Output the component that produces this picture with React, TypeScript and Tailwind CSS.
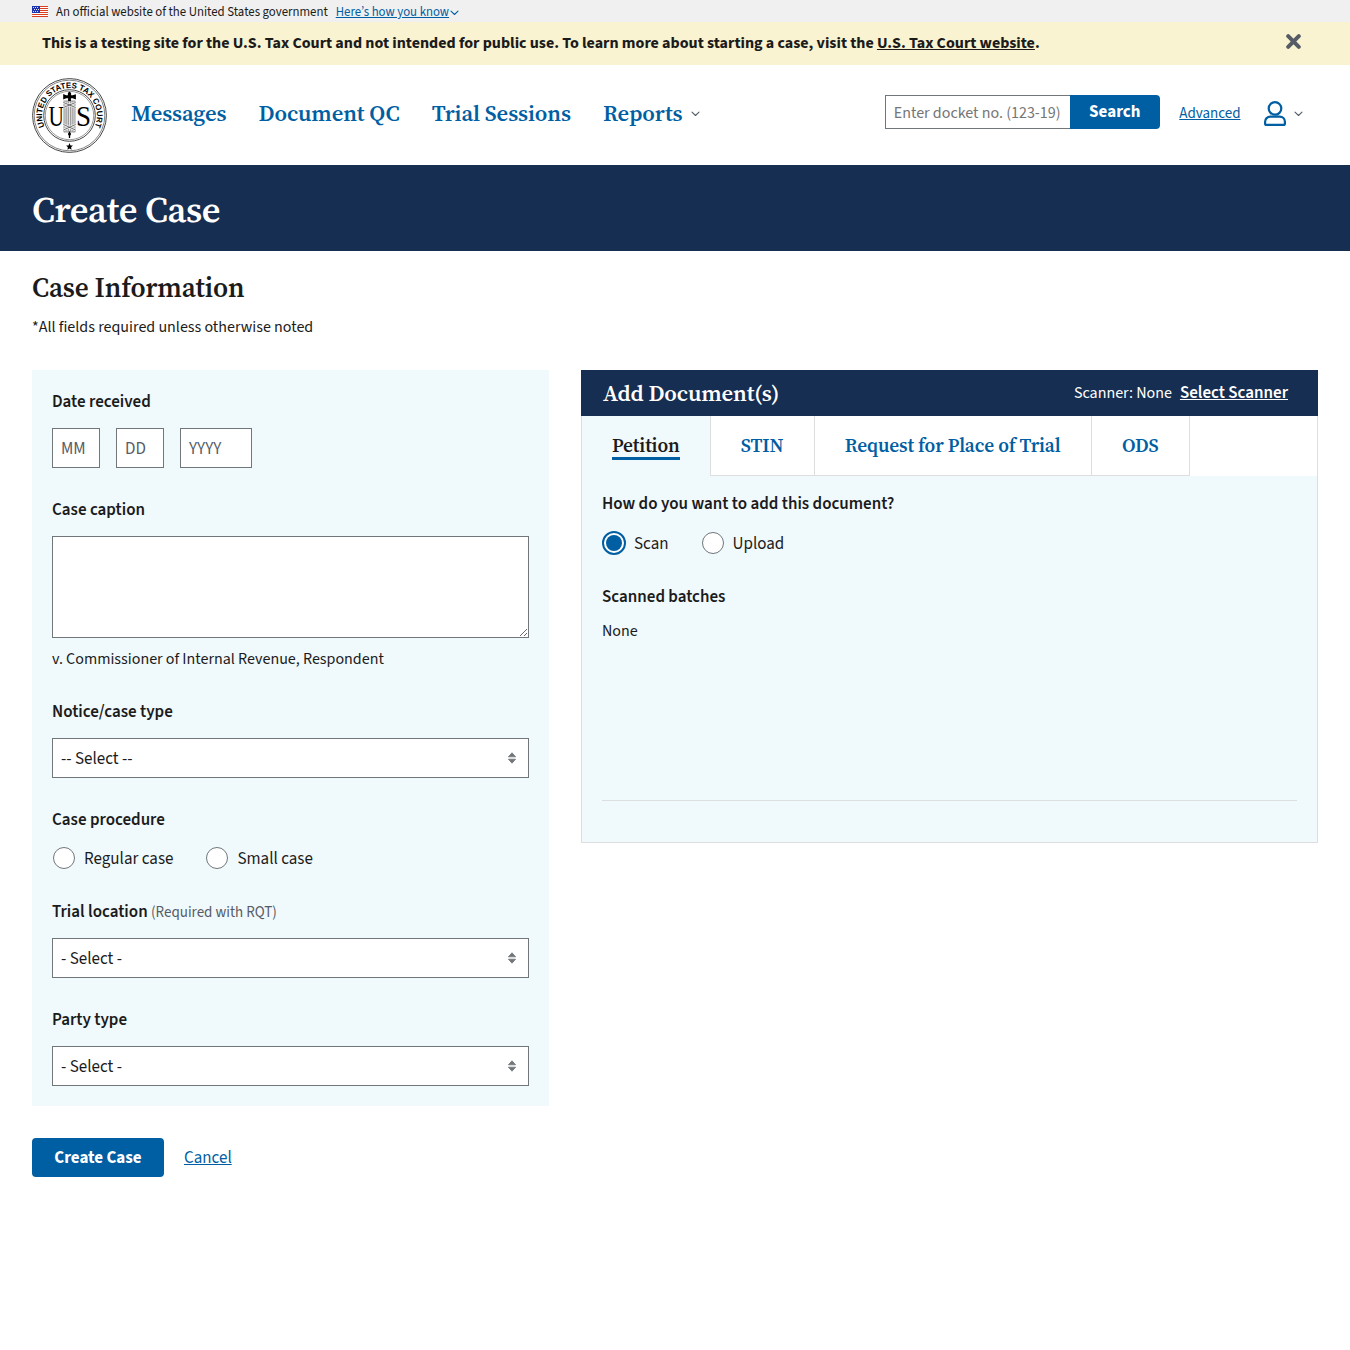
import type { ReactNode } from 'react';

const serif = "font-['Source_Serif_4','Noto_Serif_CJK_SC',serif] font-semibold";

function Flag() {
  return (
    <svg width="16" height="11" viewBox="0 0 16 11" className="block">
      <rect width="16" height="11" fill="#fff" />
      {[0, 2, 4, 6, 8, 10].map((y) => (
        <rect key={y} y={y} width="16" height="1" fill="#db3e1f" />
      ))}
      <rect width="8" height="7" fill="#1e33b1" />
      {[1, 3, 5].map((y) =>
        [1, 3, 5].map((x) => (
          <rect key={x + '-' + y} x={x + (y === 3 ? 1 : 0)} y={y} width="1" height="1" fill="#fff" opacity="0.85" />
        )),
      )}
    </svg>
  );
}

function Seal() {
  return (
    <svg width="75" height="75" viewBox="-37.5 -37.5 75 75" className="block">
      <defs>
        <path id="seal-arc" d="M -25 11.2 A 27.4 27.4 0 1 1 25 11.2" />
      </defs>
      <g fill="none" stroke="#333">
        <circle r="36.9" strokeWidth="0.9" />
        <circle r="35.3" strokeWidth="0.6" />
        <circle r="25.8" strokeWidth="0.9" />
        <circle r="24.2" strokeWidth="0.5" />
      </g>
      <text className="font-['Liberation_Sans',sans-serif] text-[8.2px] font-bold" fill="#000">
        <textPath href="#seal-arc" textLength="109" lengthAdjust="spacingAndGlyphs">UNITED STATES TAX COURT</textPath>
      </text>
      <g className="font-['Liberation_Serif',serif] text-[30px]" fill="#000">
        <text x="-21" y="10.8" textLength="15.4" lengthAdjust="spacingAndGlyphs">U</text>
        <text x="6.4" y="10.8" textLength="15" lengthAdjust="spacingAndGlyphs">S</text>
      </g>
      <rect x="-5.5" y="-14.5" width="11" height="31" fill="#e4e4e4" stroke="#555" strokeWidth="0.6" />
      <path d="M-3.4-14v30M-1.2-14v30M1.2-14v30M3.4-14v30" stroke="#666" strokeWidth="0.7" />
      <path d="M-6-13 6-8M6-13-6-8M-6 9 6 14.5M6 9-6 14.5" stroke="#fff" strokeWidth="2" />
      <path d="M-6-13 6-8M6-13-6-8M-6 9 6 14.5M6 9-6 14.5" stroke="#444" strokeWidth="0.8" />
      <path d="M-6.3-21.5l3 1.3h1.7v-2.3l1.6-1.4 1.6 1.4v2.3h1.6l3.2-1v5.2l-3.2-1.2H1.4v2.8h-2.8v-2.8h-1.9l-3 1.3z" fill="#000" />
      <path d="M0 16v6.5" stroke="#000" strokeWidth="1.3" />
      <circle cy="18.4" r="1.5" fill="#000" />
      <path d="M0 27.5l1 2.4 2.4.2-1.8 1.7.5 2.4L0 33l-2.1 1.2.5-2.4-1.8-1.7 2.4-.2z" fill="#000" />
    </svg>
  );
}

function Chevron({ className }: { className: string }) {
  return (
    <svg width="9" height="6" viewBox="0 0 9 6" className={className} fill="none" stroke="currentColor" strokeWidth="1.1" strokeLinecap="round" strokeLinejoin="round">
      <path d="M1 1.2 4.5 4.5 8 1.2" />
    </svg>
  );
}

function UserIcon() {
  return (
    <svg width="22" height="25" viewBox="0 0 22 25" className="block" fill="none" stroke="#005ea2" strokeWidth="2.2">
      <circle cx="11" cy="7.4" r="6.3" />
      <path d="M6.3 15.6h9.4a5.2 5.2 0 0 1 5.2 5.2v1.6a1.5 1.5 0 0 1-1.5 1.5H2.6a1.5 1.5 0 0 1-1.5-1.5v-1.6a5.2 5.2 0 0 1 5.2-5.2z" />
    </svg>
  );
}

function CloseIcon() {
  return (
    <svg width="15" height="15" viewBox="0 0 15 15" className="block" stroke="#565c65" strokeWidth="4" strokeLinecap="round">
      <path d="M2.2 2.2l10.6 10.6M12.8 2.2 2.2 12.8" />
    </svg>
  );
}

function Label({ children }: { children: ReactNode }) {
  return <div className="h-6 text-[17px] leading-6 font-semibold">{children}</div>;
}

function Field({ label, children }: { label: ReactNode; children: ReactNode }) {
  return (
    <div className="flex flex-col gap-3.5">
      <Label>{label}</Label>
      {children}
    </div>
  );
}

function Select({ text }: { text: string }) {
  return (
    <div className="flex h-10 items-center justify-between border border-[#71767a] bg-white pr-3 pl-2">
      <span className="pt-0.5 text-[17px] leading-6">{text}</span>
      <svg width="8" height="12" viewBox="0.5 0 8 12" className="mb-px block" fill="#71767a" stroke="#71767a" strokeWidth="0.8" strokeLinejoin="round">
        <path d="M4.5.8 8.1 4.8H.9zM4.5 11.2.9 7.2h7.2z" />
      </svg>
    </div>
  );
}

function Radio({ text, checked = false }: { text: string; checked?: boolean }) {
  return (
    <div className="flex h-6 items-center gap-2">
      <span className="flex size-6 items-center justify-center">
        {checked ? (
          <span className="flex size-6 items-center justify-center rounded-full border-2 border-[#005ea2] bg-white">
            <span className="size-4 rounded-full bg-[#005ea2]" />
          </span>
        ) : (
          <span className="size-[22px] rounded-full border border-[#71767a] bg-white" />
        )}
      </span>
      <span className="pt-0.5 text-[17px] leading-6">{text}</span>
    </div>
  );
}

function DateInput({ text, wide = false }: { text: string; wide?: boolean }) {
  return (
    <div className={'flex h-10 items-center border border-[#71767a] bg-white pt-0.5 pl-2 text-[17px] leading-6 text-[#565c65] ' + (wide ? 'w-[72px]' : 'w-12')}>
      {text}
    </div>
  );
}

function Tab({ text }: { text: string }) {
  return (
    <div className={'h-[60px] border-r border-b border-[#dcdee0] px-[30.15px] pt-[17px] text-[19.3px] leading-6 tracking-[-0.12px] text-[#005ea2] ' + serif}>
      {text}
    </div>
  );
}

export default function App() {
  return (
    <div className="min-h-[1350px] bg-white font-['Source_Sans_3','Noto_Sans_CJK_SC',sans-serif] text-[#1b1b1b]">
      <div className="flex h-[22px] items-center bg-[#f0f0f0] pt-px pl-8 text-[12.8px] leading-[22px]">
        <span className="mb-px"><Flag /></span>
        <span className="mt-px ml-2">An official website of the United States government</span>
        <a className="mt-px ml-2 text-[#005ea2] underline">Here’s how you know</a>
        <Chevron className="mt-0.5 ml-px text-[#005ea2]" />
      </div>
      <div className="flex h-[43px] items-center justify-between bg-[#faf3d1] pr-[49px] pl-[42px]">
        <p className="mb-px text-base leading-6 font-bold">
          This is a testing site for the U.S. Tax Court and not intended for public use. To learn more about starting a case, visit the{' '}
          <a className="underline">U.S. Tax Court website</a>.
        </p>
        <span className="mb-1"><CloseIcon /></span>
      </div>

      <header className="flex h-[100px] items-start justify-between pr-[47px] pl-8">
        <div className="flex items-start">
          <div className="mt-[13px]"><Seal /></div>
          <nav className={'mt-[33px] ml-6 flex gap-[32.2px] text-[22.6px] leading-8 tracking-[-0.12px] text-[#005ea2] ' + serif}>
            <a>Messages</a>
            <a>Document QC</a>
            <a>Trial Sessions</a>
            <a className="flex items-center gap-2">
              Reports
              <Chevron className="text-[#565c65]" />
            </a>
          </nav>
        </div>
        <div className="mt-[30px] flex h-[34px] items-center">
          <div className="flex h-[34px] w-[185px] items-center border border-r-0 border-[#71767a] bg-white pt-0.5 pl-2 text-base text-[#757575]">
            Enter docket no. (123-19)
          </div>
          <button className="h-[34px] w-[90px] rounded-r bg-[#005ea2] text-[17px] leading-[34px] font-bold text-white">Search</button>
          <a className="mt-1 ml-[19.5px] text-[15px] leading-6 text-[#005ea2] underline">Advanced</a>
          <span className="mt-[3px] ml-[23.5px]"><UserIcon /></span>
          <Chevron className="mt-1 ml-2 text-[#565c65]" />
        </div>
      </header>

      <div className="flex h-[86px] items-center bg-[#162e51] pl-8">
        <h1 className={'mt-px text-[36.5px] leading-10 tracking-[-0.36px] text-white ' + serif}>Create Case</h1>
      </div>

      <main className="px-8 pt-5">
        <h2 className={'text-[27.2px] leading-[34px] tracking-[-0.15px] ' + serif}>Case Information</h2>
        <p className="mt-2.5 text-base leading-6">*All fields required unless otherwise noted</p>

        <div className="mt-[31px] grid grid-cols-[517px_737px] items-start gap-8">
          <section className="flex flex-col gap-[30px] bg-[#f0f9fc] p-5">
            <Field label="Date received">
              <div className="flex gap-4">
                <DateInput text="MM" />
                <DateInput text="DD" />
                <DateInput text="YYYY" wide />
              </div>
            </Field>
            <div>
              <Label>Case caption</Label>
              <textarea className="mt-3.5 block h-[102px] w-full resize border border-[#71767a] bg-white" />
              <p className="mt-2.5 text-base leading-[22px]">v. Commissioner of Internal Revenue, Respondent</p>
            </div>
            <Field label="Notice/case type"><Select text="-- Select --" /></Field>
            <Field label="Case procedure">
              <div className="flex gap-[31.9px]">
                <Radio text="Regular case" />
                <Radio text="Small case" />
              </div>
            </Field>
            <Field label={<>Trial location <span className="text-[15px] font-normal text-[#565c65]">(Required with RQT)</span></>}>
              <Select text="- Select -" />
            </Field>
            <Field label="Party type"><Select text="- Select -" /></Field>
          </section>

          <section>
            <div className="flex h-[46px] items-center justify-between bg-[#162e51] pr-[30px] pl-[22px] text-white">
              <h3 className={'mt-0.5 text-[22.6px] leading-8 tracking-[-0.12px] ' + serif}>Add Document(s)</h3>
              <div className="flex items-baseline gap-2">
                <span className="text-base leading-6">Scanner: None</span>
                <a className="text-[17px] leading-6 font-semibold underline">Select Scanner</a>
              </div>
            </div>
            <div className="flex h-[427px] flex-col border-x border-b border-[#dcdee0] bg-[#f0f9fc]">
              <div className="flex h-[60px]">
                <div className="h-[60px] border-r border-[#dcdee0] px-[30px] pt-[17px]">
                  <div className={'border-b-[3px] border-[#005ea2] text-[19.3px] leading-6 tracking-[-0.12px] ' + serif}>Petition</div>
                </div>
                <div className="flex flex-1 bg-white">
                  <Tab text="STIN" />
                  <Tab text="Request for Place of Trial" />
                  <Tab text="ODS" />
                </div>
              </div>
              <div className="mx-5 h-[325px] border-b border-[#dcdee0] pt-4">
                <Label>How do you want to add this document?</Label>
                <div className="mt-[15px] flex gap-8">
                  <Radio text="Scan" checked />
                  <Radio text="Upload" />
                </div>
                <div className="mt-[30px]"><Label>Scanned batches</Label></div>
                <p className="mt-2.5 text-base leading-6">None</p>
              </div>
            </div>
          </section>
        </div>

        <div className="mt-8 flex items-center gap-5 text-[17px] leading-6">
          <button className="h-[39px] w-[132px] rounded bg-[#005ea2] font-bold text-white">Create Case</button>
          <a className="text-[#005ea2] underline">Cancel</a>
        </div>
      </main>
    </div>
  );
}
